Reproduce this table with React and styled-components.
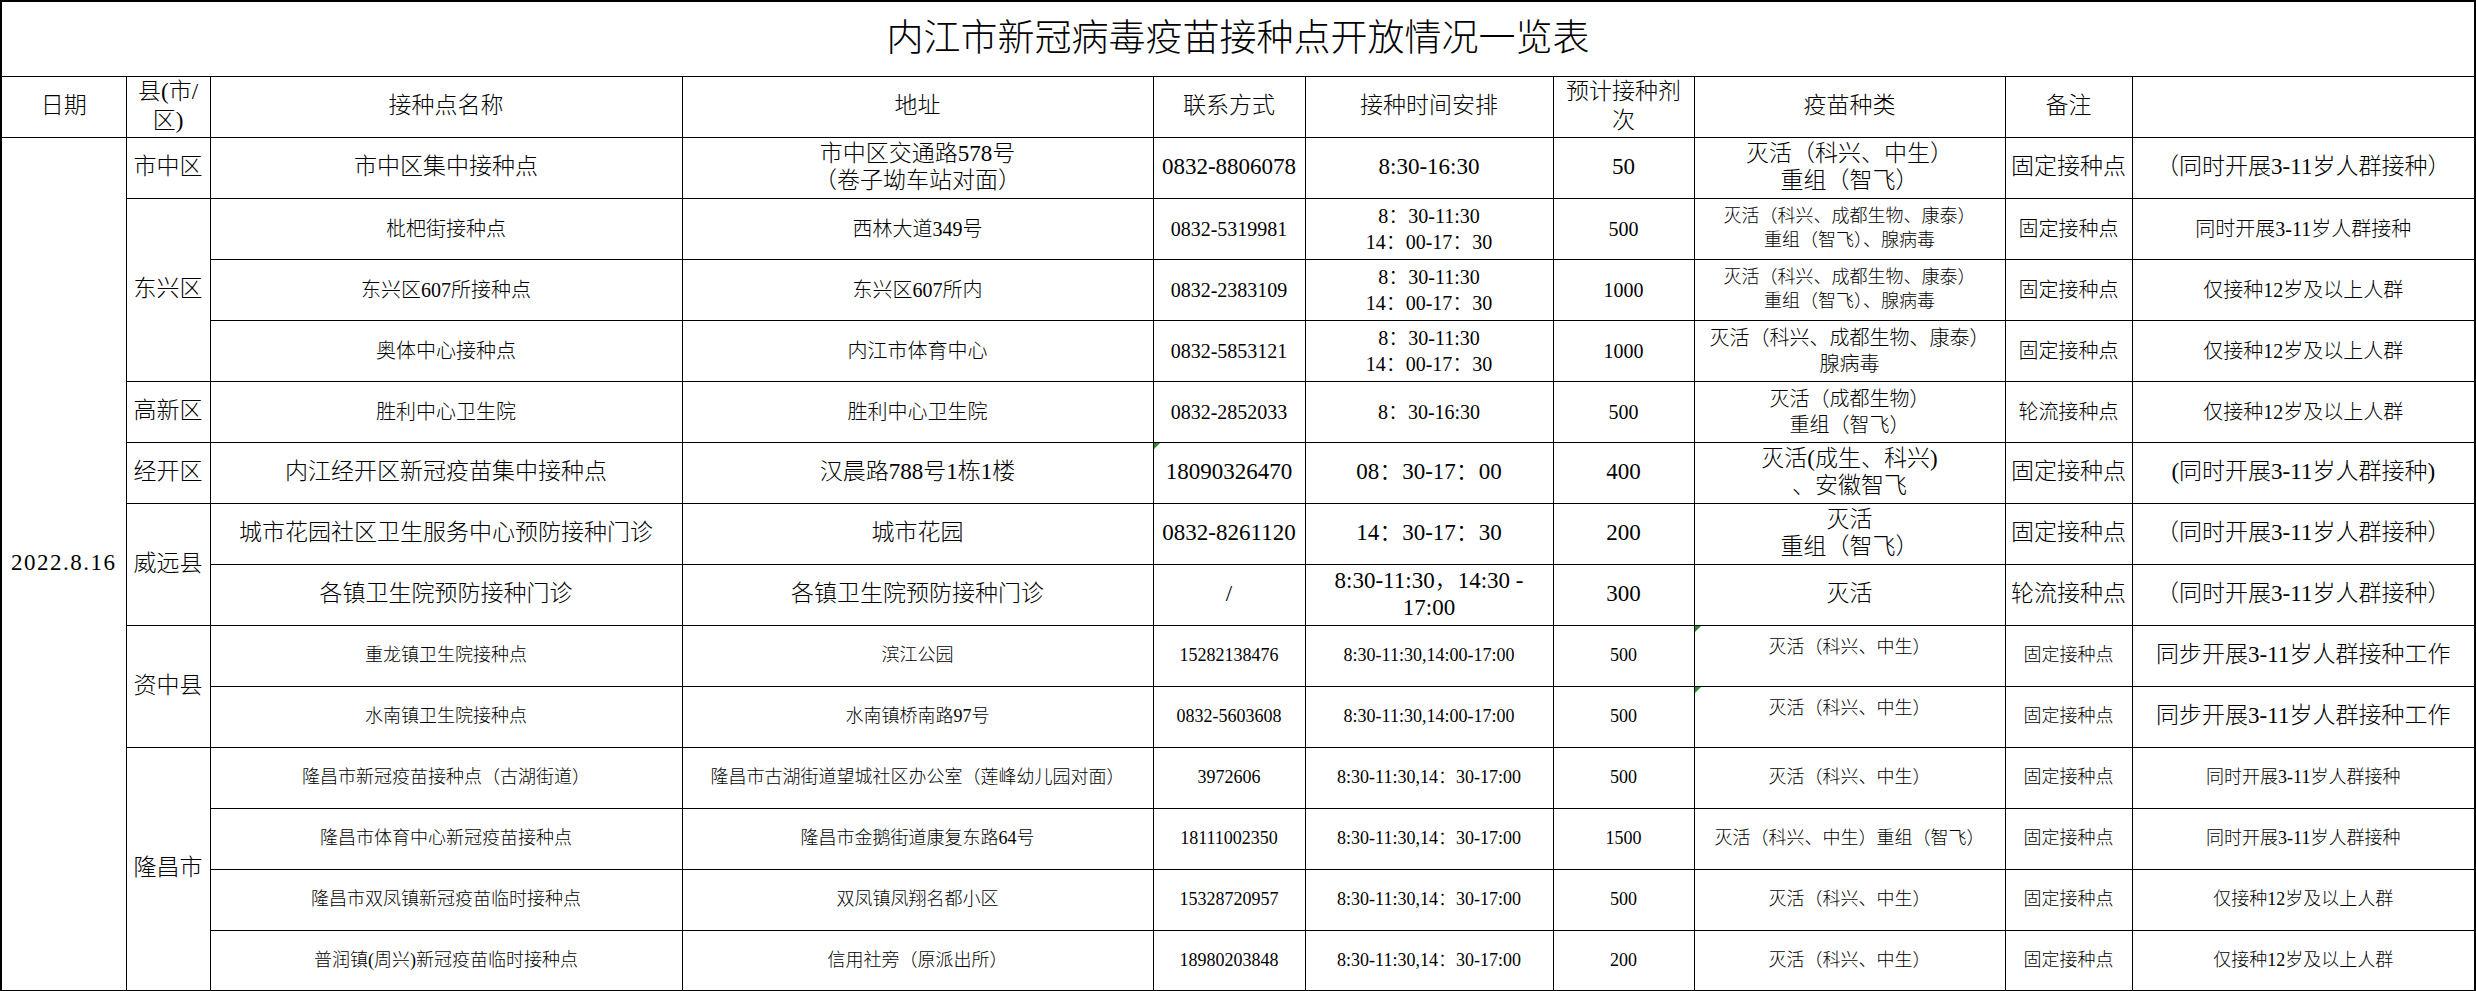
import React from "react";
import styled, { createGlobalStyle } from "styled-components";

const Global = createGlobalStyle`
  html, body { margin: 0; padding: 0; background: #fff; }
  body {
    font-family: "Liberation Serif", "Noto Sans CJK SC", serif;
    color: #000;
  }
`;

const Sheet = styled.table`
  border-collapse: collapse;
  table-layout: fixed;
  width: 2474px;
  border: 2px solid #000;
`;

const Row = styled.tr`
  height: ${(p) => p.$h}px;
`;

const TitleCell = styled.th`
  border: 1px solid #000;
  padding: 0;
  font-size: 37px;
  font-weight: 300;
  text-align: center;
  vertical-align: middle;
  line-height: 1.2;
`;

const HeadCell = styled.th`
  border: 1px solid #000;
  padding: 0 2px;
  font-size: 23px;
  font-weight: 300;
  text-align: center;
  vertical-align: middle;
  line-height: 1.25;
  white-space: nowrap;
`;

const Cell = styled.td`
  position: relative;
  border: 1px solid #000;
  padding: ${(p) => (p.$top ? "10px 2px 0" : "0 2px")};
  font-size: ${(p) => p.$s}px;
  font-weight: 300;
  line-height: ${(p) => (p.$s >= 23 ? 1.17 : 1.3)};
  letter-spacing: ${(p) => (p.$wide ? "1.5px" : "normal")};
  text-align: center;
  vertical-align: ${(p) => (p.$top ? "top" : "middle")};
  white-space: nowrap;
  overflow: hidden;
`;

const Line = styled.span`
  display: block;
  text-align: center;
`;

const Flag = styled.span`
  position: absolute;
  left: 0;
  top: 0;
  width: 0;
  height: 0;
  border-top: 6px solid #2e8b2e;
  border-right: 6px solid transparent;
`;

const Lines = ({ text }) =>
  text.split("\n").map((l, i) => <Line key={i}>{l}</Line>);

const widths = [125, 84, 472, 471, 152, 248, 141, 311, 127, 343];

const headers = [
  "日期",
  "县(市/\n区)",
  "接种点名称",
  "地址",
  "联系方式",
  "接种时间安排",
  "预计接种剂\n次",
  "疫苗种类",
  "备注",
  "",
];

const rows = [
  {
    county: { t: "市中区", span: 1 },
    s: 23,
    cells: [
      "市中区集中接种点",
      "市中区交通路578号\n（卷子坳车站对面）",
      "0832-8806078",
      "8:30-16:30",
      "50",
      "灭活（科兴、中生）\n重组（智飞）",
      "固定接种点",
      "（同时开展3-11岁人群接种）",
    ],
  },
  {
    county: { t: "东兴区", span: 3 },
    s: 20,
    cells: [
      "枇杷街接种点",
      "西林大道349号",
      "0832-5319981",
      "8：30-11:30\n14：00-17：30",
      "500",
      { t: "灭活（科兴、成都生物、康泰）\n重组（智飞）、腺病毒", s: 18 },
      "固定接种点",
      "同时开展3-11岁人群接种",
    ],
  },
  {
    s: 20,
    cells: [
      "东兴区607所接种点",
      "东兴区607所内",
      "0832-2383109",
      "8：30-11:30\n14：00-17：30",
      "1000",
      { t: "灭活（科兴、成都生物、康泰）\n重组（智飞）、腺病毒", s: 18 },
      "固定接种点",
      "仅接种12岁及以上人群",
    ],
  },
  {
    s: 20,
    cells: [
      "奥体中心接种点",
      "内江市体育中心",
      "0832-5853121",
      "8：30-11:30\n14：00-17：30",
      "1000",
      "灭活（科兴、成都生物、康泰）\n腺病毒",
      "固定接种点",
      "仅接种12岁及以上人群",
    ],
  },
  {
    county: { t: "高新区", span: 1 },
    s: 20,
    cells: [
      "胜利中心卫生院",
      "胜利中心卫生院",
      "0832-2852033",
      "8：30-16:30",
      "500",
      "灭活（成都生物）\n重组（智飞）",
      "轮流接种点",
      "仅接种12岁及以上人群",
    ],
  },
  {
    county: { t: "经开区", span: 1 },
    s: 23,
    cells: [
      "内江经开区新冠疫苗集中接种点",
      "汉晨路788号1栋1楼",
      { t: "18090326470", flag: true },
      "08：30-17：00",
      "400",
      "灭活(成生、科兴)\n、安徽智飞",
      "固定接种点",
      "(同时开展3-11岁人群接种)",
    ],
  },
  {
    county: { t: "威远县", span: 2 },
    s: 23,
    cells: [
      "城市花园社区卫生服务中心预防接种门诊",
      "城市花园",
      "0832-8261120",
      "14：30-17：30",
      "200",
      "灭活\n重组（智飞）",
      "固定接种点",
      "（同时开展3-11岁人群接种）",
    ],
  },
  {
    s: 23,
    cells: [
      "各镇卫生院预防接种门诊",
      "各镇卫生院预防接种门诊",
      "/",
      "8:30-11:30，14:30 -\n17:00",
      "300",
      "灭活",
      "轮流接种点",
      "（同时开展3-11岁人群接种）",
    ],
  },
  {
    county: { t: "资中县", span: 2 },
    s: 18,
    cells: [
      "重龙镇卫生院接种点",
      "滨江公园",
      "15282138476",
      "8:30-11:30,14:00-17:00",
      "500",
      { t: "灭活（科兴、中生）", top: true, flag: true },
      "固定接种点",
      { t: "同步开展3-11岁人群接种工作", s: 23 },
    ],
  },
  {
    s: 18,
    cells: [
      "水南镇卫生院接种点",
      "水南镇桥南路97号",
      "0832-5603608",
      "8:30-11:30,14:00-17:00",
      "500",
      { t: "灭活（科兴、中生）", top: true, flag: true },
      "固定接种点",
      { t: "同步开展3-11岁人群接种工作", s: 23 },
    ],
  },
  {
    county: { t: "隆昌市", span: 4 },
    s: 18,
    cells: [
      "隆昌市新冠疫苗接种点（古湖街道）",
      "隆昌市古湖街道望城社区办公室（莲峰幼儿园对面）",
      "3972606",
      "8:30-11:30,14：30-17:00",
      "500",
      "灭活（科兴、中生）",
      "固定接种点",
      "同时开展3-11岁人群接种",
    ],
  },
  {
    s: 18,
    cells: [
      "隆昌市体育中心新冠疫苗接种点",
      "隆昌市金鹅街道康复东路64号",
      "18111002350",
      "8:30-11:30,14：30-17:00",
      "1500",
      "灭活（科兴、中生）重组（智飞）",
      "固定接种点",
      "同时开展3-11岁人群接种",
    ],
  },
  {
    s: 18,
    cells: [
      "隆昌市双凤镇新冠疫苗临时接种点",
      "双凤镇凤翔名都小区",
      "15328720957",
      "8:30-11:30,14：30-17:00",
      "500",
      "灭活（科兴、中生）",
      "固定接种点",
      "仅接种12岁及以上人群",
    ],
  },
  {
    s: 18,
    cells: [
      "普润镇(周兴)新冠疫苗临时接种点",
      "信用社旁（原派出所）",
      "18980203848",
      "8:30-11:30,14：30-17:00",
      "200",
      "灭活（科兴、中生）",
      "固定接种点",
      "仅接种12岁及以上人群",
    ],
  },
];

export default function App() {
  return (
    <>
      <Global />
      <Sheet>
        <colgroup>
          {widths.map((w, i) => (
            <col key={i} style={{ width: w }} />
          ))}
        </colgroup>
        <thead>
          <Row $h={75}>
            <TitleCell colSpan={10}>内江市新冠病毒疫苗接种点开放情况一览表</TitleCell>
          </Row>
          <Row $h={61}>
            {headers.map((h, i) => (
              <HeadCell key={i}>
                <Lines text={h} />
              </HeadCell>
            ))}
          </Row>
        </thead>
        <tbody>
          {rows.map((r, ri) => (
            <Row $h={61} key={ri}>
              {ri === 0 && (
                <Cell $s={23} $wide rowSpan={rows.length}>
                  2022.8.16
                </Cell>
              )}
              {r.county && (
                <Cell $s={23} rowSpan={r.county.span}>
                  {r.county.t}
                </Cell>
              )}
              {r.cells.map((c, ci) => {
                const cell = typeof c === "string" ? { t: c } : c;
                return (
                  <Cell key={ci} $s={cell.s || r.s} $top={cell.top}>
                    {cell.flag && <Flag />}
                    <Lines text={cell.t} />
                  </Cell>
                );
              })}
            </Row>
          ))}
        </tbody>
      </Sheet>
    </>
  );
}
